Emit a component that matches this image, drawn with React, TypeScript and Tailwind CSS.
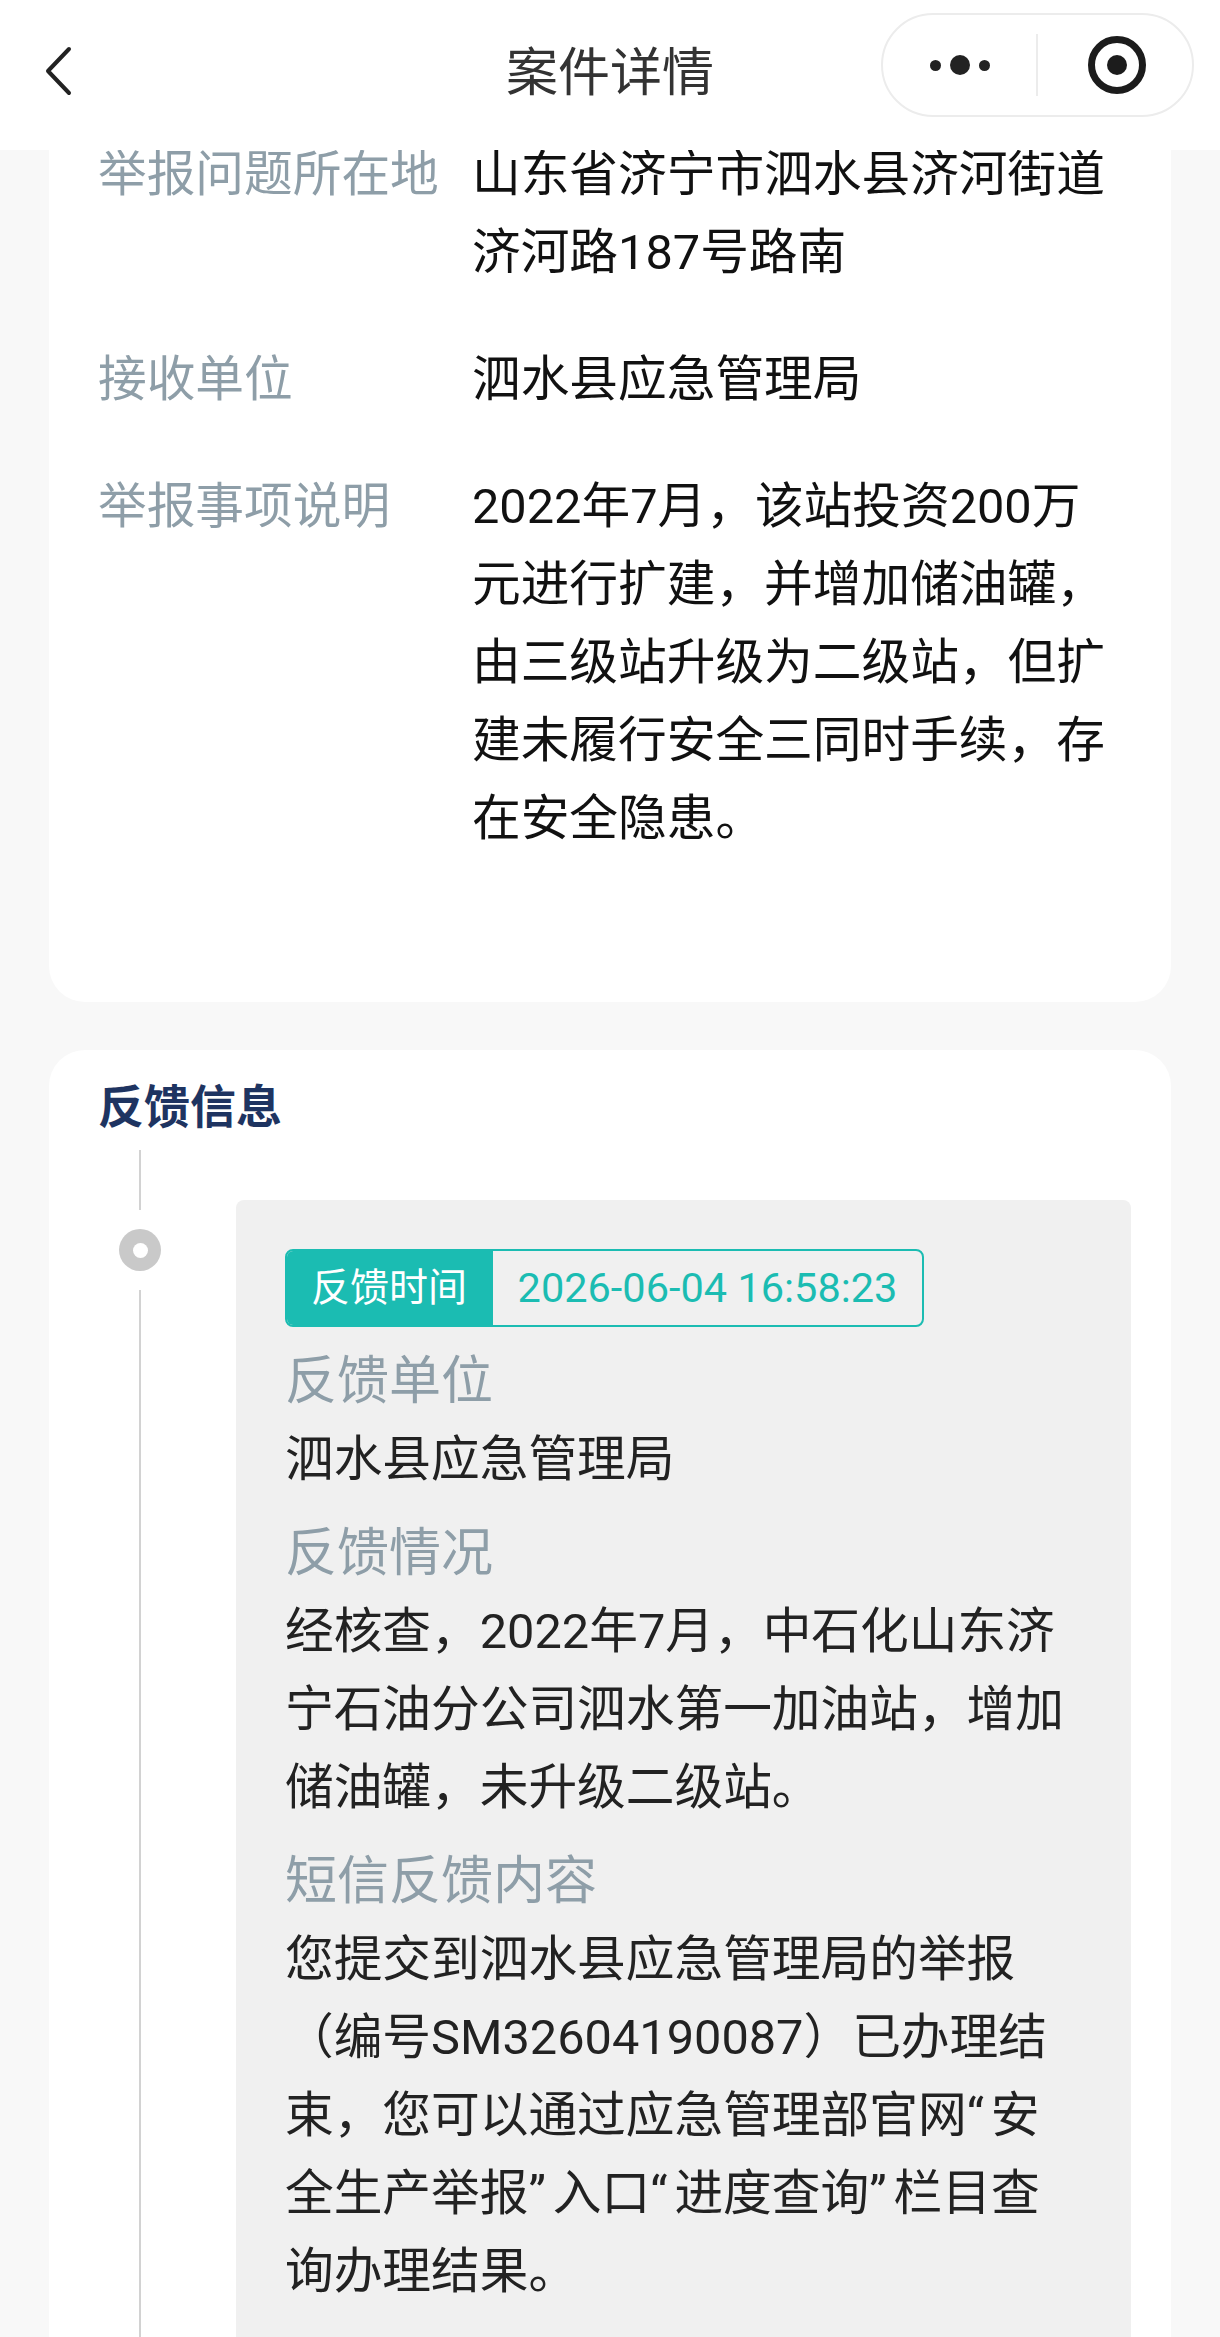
const FONT = "font-['Roboto','Noto_Sans_CJK_SC',sans-serif]";

const ROWS = [
  { label: "举报问题所在地", value: "山东省济宁市泗水县济河街道济河路187号路南" },
  { label: "接收单位", value: "泗水县应急管理局" },
  {
    label: "举报事项说明",
    value: "2022年7月，该站投资200万元进行扩建，并增加储油罐，由三级站升级为二级站，但扩建未履行安全三同时手续，存在安全隐患。",
  },
];

const FEEDBACK = [
  { label: "反馈单位", value: "泗水县应急管理局" },
  { label: "反馈情况", value: "经核查，2022年7月，中石化山东济宁石油分公司泗水第一加油站，增加储油罐，未升级二级站。" },
  {
    label: "短信反馈内容",
    value: "您提交到泗水县应急管理局的举报（编号SM32604190087）已办理结束，您可以通过应急管理部官网“安全生产举报”入口“进度查询”栏目查询办理结果。",
  },
];

// Roboto's curly quotes are a little tighter than the reference's
function withQuotes(text: string) {
  return text.split(/([“”])/).map((part, i) =>
    part === "“" || part === "”" ? (
      <span key={i} className="tracking-[7px]">
        {part}
      </span>
    ) : (
      part
    ),
  );
}

function Header() {
  return (
    <header className="relative z-10 flex h-[150px] items-center justify-center bg-white">
      <button type="button" aria-label="返回" className="absolute left-[42px] top-[46px]">
        <svg width="32" height="50" viewBox="0 0 32 50" fill="none">
          <path d="M27 3 L6 25 L27 47" stroke="#222" strokeWidth="4" strokeLinecap="round" strokeLinejoin="round" />
        </svg>
      </button>
      <h1 className="-mt-[3px] text-[52px] leading-[78px] text-[#333]">案件详情</h1>
      <div className="absolute left-[881px] top-[13px] flex h-[104px] w-[313px] items-center rounded-full border-2 border-[#ececec] bg-white">
        <div className="flex w-[153px] items-center justify-center gap-[9px]">
          <span className="h-[11px] w-[11px] rounded-full bg-[#222]" />
          <span className="h-[20px] w-[20px] rounded-full bg-[#222]" />
          <span className="h-[11px] w-[11px] rounded-full bg-[#222]" />
        </div>
        <div className="h-[62px] w-[2px] bg-[#ececec]" />
        <div className="flex flex-1 items-center justify-center pl-[4px]">
          <svg width="58" height="58" viewBox="0 0 58 58" fill="none">
            <circle cx="29" cy="29" r="25.5" stroke="#1c1c1c" strokeWidth="7" />
            <circle cx="29" cy="29" r="10" fill="#1c1c1c" />
          </svg>
        </div>
      </div>
    </header>
  );
}

export default function App() {
  return (
    <div className={`h-[2337px] overflow-hidden bg-[#f8f8f8] ${FONT}`}>
      <Header />
      <main className="-mt-[14px] flex flex-col gap-[48px] px-[49px]">
        <section className="flex flex-col gap-[49px] rounded-b-[36px] bg-white pb-[144px] pl-[49px] pr-[58px]">
          {ROWS.map((row) => (
            <div key={row.label} className="flex text-[48.7px] leading-[78px]">
              <div className="w-[374px] shrink-0 text-[#8e9ea8]">{row.label}</div>
              <div className="text-[#111]">{row.value}</div>
            </div>
          ))}
        </section>

        <section className="rounded-[36px] bg-white pl-[49px] pr-[40px] pt-[18px]">
          <h2 className="mb-[4px] text-[46px] font-bold leading-[78px] text-[#1e3461]">反馈信息</h2>
          <div className="flex">
            <div className="flex w-[84px] shrink-0 flex-col items-center">
              <div className="h-[60px] w-[2px] bg-[#d2d2d2]" />
              <div className="my-[19px] flex h-[42px] w-[42px] items-center justify-center rounded-full bg-[#c9c9c9]">
                <div className="h-[15px] w-[15px] rounded-full bg-white" />
              </div>
              <div className="h-[1100px] w-[2px] bg-[#d2d2d2]" />
            </div>
            <div className="ml-[54px] mt-[50px] h-[1200px] flex-1 rounded-[8px] bg-[#f0f0f0] pl-[49px] pr-[63px] pt-[49px]">
              <div className="mb-[16px] flex h-[78px] w-[639px] overflow-hidden rounded-[8px] border-2 border-[#1bbcb2] text-[39px]">
                <div className="-my-[2px] -ml-[2px] flex w-[208px] items-center justify-center bg-[#1bbcb2] text-white">反馈时间</div>
                <div className="flex flex-1 items-center justify-center text-[41.5px] text-[#1bbcb2]">2026-06-04 16:58:23</div>
              </div>
              <div className="flex flex-col gap-[16px]">
                {FEEDBACK.map((item) => (
                  <div key={item.label}>
                    <div className="text-[52px] leading-[78px] text-[#8e9ea8]">{item.label}</div>
                    <div className="text-[48.7px] leading-[78px] text-[#222]">{withQuotes(item.value)}</div>
                  </div>
                ))}
              </div>
            </div>
          </div>
        </section>
      </main>
    </div>
  );
}
